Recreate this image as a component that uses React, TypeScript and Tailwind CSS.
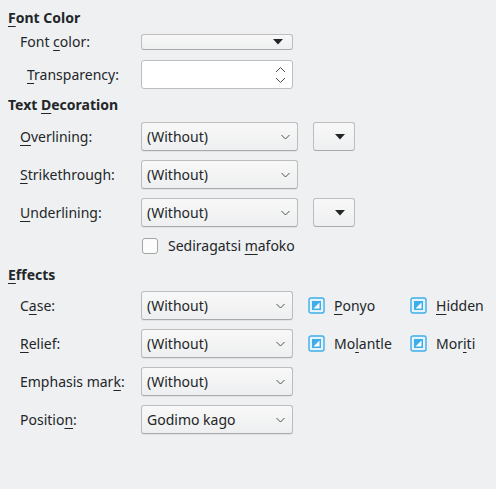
import React from 'react';

const font = { fontFamily: '"Noto Sans", "DejaVu Sans", sans-serif' };

function U({ children }: { children: React.ReactNode }) {
  return <span className="underline decoration-1 underline-offset-[3px]">{children}</span>;
}

function Chevron() {
  return (
    <svg width="9" height="6" viewBox="0 0 9 6" className="shrink-0">
      <polyline points="0.5,1 4.5,5 8.5,1" fill="none" stroke="#4d5053" strokeWidth="1" />
    </svg>
  );
}

function Triangle() {
  return (
    <svg width="10" height="6" viewBox="0 0 10 6">
      <polygon points="0,0 10,0 5,5.5" fill="#232629" />
    </svg>
  );
}

function Combo({ value, w }: { value: string; w: string }) {
  return (
    <div
      className={`${w} h-[29px] flex items-center justify-between pl-[5px] pr-[7px] rounded-[3px] border border-[#bcbdbe] border-b-[#a9aaab] bg-linear-to-b from-[#f8f8f8] to-[#eeeff0] shadow-[0_1px_1px_rgba(0,0,0,0.06)]`}
    >
      <span>{value}</span>
      <Chevron />
    </div>
  );
}

function ColorButton() {
  return (
    <div className="ml-[15px] w-[42px] h-[29px] flex items-center justify-end pr-[9px] rounded-[3px] border border-[#bcbdbe] border-b-[#a9aaab] bg-linear-to-b from-[#f8f8f8] to-[#eeeff0]">
      <Triangle />
    </div>
  );
}

function Tri() {
  return (
    <svg width="17" height="17" viewBox="0 0 17 17" className="shrink-0">
      <rect x="1" y="1" width="15" height="15" rx="2" fill="#e6f3fb" stroke="#3daee9" strokeWidth="1.4" />
      <rect x="4" y="4" width="9" height="9" fill="#3daee9" />
      <polygon points="5.5,11.5 11.5,11.5 11.5,5.5" fill="#ffffff" />
    </svg>
  );
}

function Row({ label, children }: { label: React.ReactNode; children: React.ReactNode }) {
  return (
    <div className="flex items-center pl-[12px]">
      <div className="w-[121px] shrink-0">{label}</div>
      {children}
    </div>
  );
}

function Check({ label, first }: { label: React.ReactNode; first?: boolean }) {
  return (
    <div className={`flex items-center ${first ? 'ml-[15px] w-[102px]' : ''}`}>
      <Tri />
      <span className="ml-[9px]">{label}</span>
    </div>
  );
}

export default function App() {
  return (
    <div
      className="w-[496px] h-[489px] bg-[#eff0f1] text-[#232629] text-[14px] leading-[18px] pl-2 overflow-hidden"
      style={font}
    >
      {/* Font Color */}
      <div className="pt-[9px] font-bold">
        <U>F</U>ont Color
      </div>
      <div className="mt-[6px]">
        <Row label={<>Font <U>c</U>olor:</>}>
          <div className="w-[152px] h-[16px] flex items-center justify-end pr-[9px] rounded-[3px] border border-[#bcbdbe] border-b-[#a9aaab] bg-linear-to-b from-[#f8f8f8] to-[#eeeff0]">
            <Triangle />
          </div>
        </Row>
      </div>
      <div className="mt-[9px]">
        <Row label={<span className="pl-[7px]"><U>T</U>ransparency:</span>}>
          <div className="w-[152px] h-[29px] flex items-center justify-end pr-[6px] rounded-[3px] border border-[#bcbdbe] bg-white">
            <svg width="11" height="18" viewBox="0 0 11 18">
              <polyline points="1,6 5.5,1.5 10,6" fill="none" stroke="#4d5053" strokeWidth="1" />
              <polyline points="1,12 5.5,16.5 10,12" fill="none" stroke="#4d5053" strokeWidth="1" />
            </svg>
          </div>
        </Row>
      </div>

      {/* Text Decoration */}
      <div className="mt-[7px] font-bold">
        Text <U>D</U>ecoration
      </div>
      <div className="mt-[8px] flex flex-col gap-[9px]">
        <Row label={<><U>O</U>verlining:</>}>
          <Combo value="(Without)" w="w-[157px]" />
          <ColorButton />
        </Row>
        <Row label={<><U>S</U>trikethrough:</>}>
          <Combo value="(Without)" w="w-[157px]" />
        </Row>
        <Row label={<><U>U</U>nderlining:</>}>
          <Combo value="(Without)" w="w-[157px]" />
          <ColorButton />
        </Row>
      </div>
      <div className="mt-[10px] flex items-center pl-[134px]">
        <div className="w-[16px] h-[16px] rounded-[3px] border border-[#a3a4a5] bg-[#fcfcfc]" />
        <span className="ml-[10px]">
          Sediragatsi <U>m</U>afoko
        </span>
      </div>

      {/* Effects */}
      <div className="mt-[11px] font-bold">
        <U>E</U>ffects
      </div>
      <div className="mt-[7px] flex flex-col gap-[9px]">
        <Row label={<>C<U>a</U>se:</>}>
          <Combo value="(Without)" w="w-[152px]" />
          <Check first label={<><U>P</U>onyo</>} />
          <Check label={<><U>H</U>idden</>} />
        </Row>
        <Row label={<><U>R</U>elief:</>}>
          <Combo value="(Without)" w="w-[152px]" />
          <Check first label={<>Mo<U>l</U>antle</>} />
          <Check label={<>Mor<U>i</U>ti</>} />
        </Row>
        <Row label={<>Emphasis mar<U>k</U>:</>}>
          <Combo value="(Without)" w="w-[152px]" />
        </Row>
        <Row label={<>Positio<U>n</U>:</>}>
          <Combo value="Godimo kago" w="w-[152px]" />
        </Row>
      </div>
    </div>
  );
}
